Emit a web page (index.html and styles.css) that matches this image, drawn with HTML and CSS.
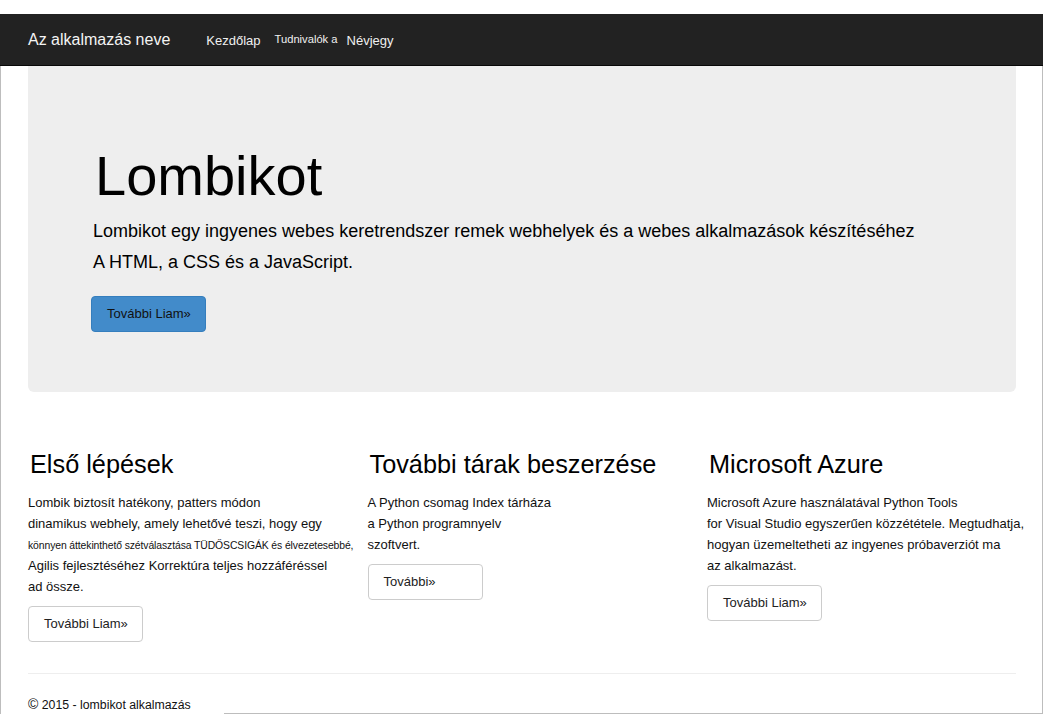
FILE: index.html
```html
<!DOCTYPE html>
<html lang="hu">
<head>
<meta charset="utf-8">
<title>Lombikot</title>
<link rel="stylesheet" href="styles.css">
</head>
<body>
<div class="topgap"></div>
<nav class="navbar">
  <a class="brand" href="#">Az alkalmazás neve</a>
  <ul class="nav">
    <li class="nav-first"><a href="#">Kezdőlap</a></li>
    <li class="nav-small"><a href="#">Tudnivalók a</a></li>
    <li class="nav-last"><a href="#">Névjegy</a></li>
  </ul>
</nav>
<div class="frame">
  <div class="container">
    <div class="jumbotron">
      <h1>Lombikot</h1>
      <p class="lead">Lombikot egy ingyenes webes keretrendszer remek webhelyek és a webes alkalmazások készítéséhez<br>A HTML, a CSS és a JavaScript.</p>
      <a class="btn btn-primary" href="#">További Liam»</a>
    </div>
    <div class="row">
      <div class="col">
        <h2>Első lépések</h2>
        <p>Lombik biztosít hatékony, patters módon<br>dinamikus webhely, amely lehetővé teszi, hogy egy<br><span class="tiny">könnyen áttekinthető szétválasztása TÜDŐSCSIGÁK és élvezetesebbé,</span><br>Agilis fejlesztéséhez Korrektúra teljes hozzáféréssel<br>ad össze.</p>
        <a class="btn" href="#">További Liam»</a>
      </div>
      <div class="col">
        <h2>További tárak beszerzése</h2>
        <p>A Python csomag Index tárháza<br>a Python programnyelv<br>szoftvert.</p>
        <a class="btn" href="#">További»</a>
      </div>
      <div class="col">
        <h2>Microsoft Azure</h2>
        <p>Microsoft Azure használatával Python Tools<br>for Visual Studio egyszerűen közzététele. Megtudhatja,<br>hogyan üzemeltetheti az ingyenes próbaverziót ma<br>az alkalmazást.</p>
        <a class="btn" href="#">További Liam»</a>
      </div>
    </div>
    <hr class="rule">
  </div>
  <footer class="footer">
    <p class="copy"><span class="copy-sign">©</span> 2015 - lombikot alkalmazás</p>
    <span class="edge"></span>
  </footer>
</div>
</body>
</html>
```
FILE: styles.css
```css
html, body {
  margin: 0;
  padding: 0;
  overflow: hidden;
  background: #fff;
}
body {
  font-family: "Liberation Sans", Arial, sans-serif;
  color: #111;
  width: 1043px;
  height: 714px;
}
a { text-decoration: none; }

.topgap { height: 14px; }

.navbar {
  height: 51px;
  background: #222;
  border-bottom: 1px solid #080808;
  display: flex;
  align-items: center;
  padding-left: 28px;
}
.brand {
  color: #f4f4f4;
  font-size: 16px;
  margin-right: 36px;
}
.nav {
  list-style: none;
  margin: 0;
  padding: 0;
  display: flex;
  align-items: baseline;
}
.nav a {
  color: #f0f0f0;
  font-size: 13px;
}
.nav li.nav-first { margin-right: 14px; }
.nav-small { position: relative; top: -2px; }
.nav .nav-small a { font-size: 11.2px; }
.nav li.nav-small { margin-right: 9px; }

.frame {
  height: 648px;
  box-sizing: border-box;
  border-left: 1px solid #bdbdbd;
  border-right: 1px solid #bdbdbd;
  display: flex;
  flex-direction: column;
  overflow: hidden;
}
.container {
  padding: 0 26px 0 27px;
}

.jumbotron {
  background: #eee;
  border-radius: 0 0 6px 6px;
  padding: 78px 40px 60px 63px;
}
.jumbotron h1 {
  margin: 0 0 0 4px;
  font-size: 56px;
  font-weight: normal;
  line-height: 63px;
  color: #000;
}
.lead {
  margin: 9px 0 18px 2px;
  font-size: 18px;
  line-height: 31px;
  color: #000;
  white-space: nowrap;
}

.btn {
  display: block;
  box-sizing: border-box;
  width: 115px;
  height: 36px;
  line-height: 34px;
  padding-left: 15px;
  font-size: 13px;
  color: #222;
  background: #fff;
  border: 1px solid #ccc;
  border-radius: 4px;
}
.btn-primary {
  background: #428bca;
  border-color: #357ebd;
  color: #111;
}

.row {
  display: grid;
  grid-template-columns: repeat(3, 339.5px);
  margin: 57px -15px 0;
}
.col { padding: 0 15px; }
.col h2 {
  margin: 0 0 13px 2px;
  font-size: 25.3px;
  font-weight: normal;
  line-height: 30px;
  color: #000;
  white-space: nowrap;
}
.col p {
  margin: 0 0 9px;
  font-size: 13px;
  line-height: 21px;
  color: #111;
  white-space: nowrap;
}
.tiny { font-size: 10.4px; line-height: 10px; letter-spacing: -0.1px; }

.rule {
  margin: 31px 0 0;
  border: 0;
  border-top: 1px solid #eee;
  height: 0;
}

.footer {
  margin-top: auto;
  height: 40px;
  display: flex;
  flex: none;
}
.copy {
  margin: 0;
  box-sizing: border-box;
  width: 223px;
  padding: 21px 0 0 27px;
  font-size: 12.3px;
  line-height: 18px;
  color: #111;
  white-space: nowrap;
}
.copy-sign { font-size: 14px; }
.edge {
  flex: 1;
  border-bottom: 1px solid #bdbdbd;
}
```
